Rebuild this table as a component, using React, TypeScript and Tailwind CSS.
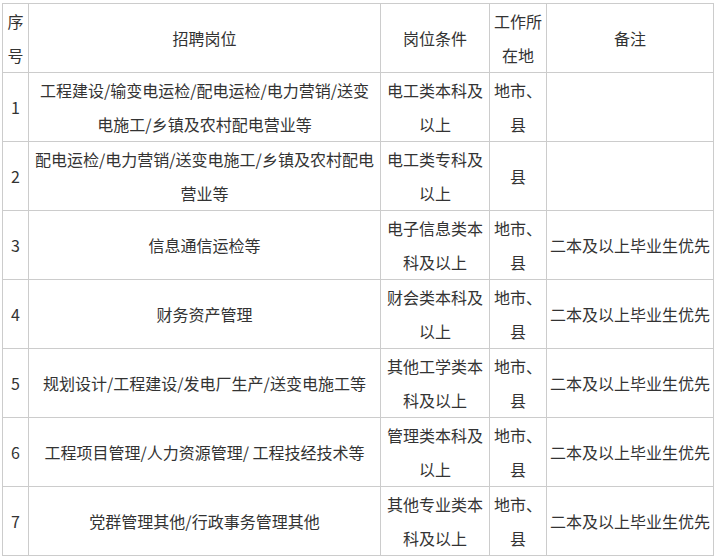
const rows = [
  {
    no: '1',
    post: '工程建设/输变电运检/配电运检/电力营销/送变电施工/乡镇及农村配电营业等',
    cond: '电工类本科及以上',
    place: '地市、县',
    note: '',
  },
  {
    no: '2',
    post: '配电运检/电力营销/送变电施工/乡镇及农村配电营业等',
    cond: '电工类专科及以上',
    place: '县',
    note: '',
  },
  {
    no: '3',
    post: '信息通信运检等',
    cond: '电子信息类本科及以上',
    place: '地市、县',
    note: '二本及以上毕业生优先',
  },
  {
    no: '4',
    post: '财务资产管理',
    cond: '财会类本科及以上',
    place: '地市、县',
    note: '二本及以上毕业生优先',
  },
  {
    no: '5',
    post: '规划设计/工程建设/发电厂生产/送变电施工等',
    cond: '其他工学类本科及以上',
    place: '地市、县',
    note: '二本及以上毕业生优先',
  },
  {
    no: '6',
    post: '工程项目管理/人力资源管理/ 工程技经技术等',
    cond: '管理类本科及以上',
    place: '地市、县',
    note: '二本及以上毕业生优先',
  },
  {
    no: '7',
    post: '党群管理其他/行政事务管理其他',
    cond: '其他专业类本科及以上',
    place: '地市、县',
    note: '二本及以上毕业生优先',
  },
]

const cell = 'border border-[#cccccc] px-[3px] py-0 text-center align-middle break-all'

export default function App() {
  return (
    <div className="min-h-screen bg-white pl-[2px] pt-[3px] text-[16px] leading-[34px] text-[#333333] font-['Noto_Sans_CJK_SC','Noto_Sans',sans-serif]">
      <table className="table-fixed border-collapse w-[712px]">
        <colgroup>
          <col className="w-[26px]" />
          <col className="w-[352px]" />
          <col className="w-[109px]" />
          <col className="w-[57px]" />
          <col className="w-[167px]" />
        </colgroup>
        <thead>
          <tr className="h-[69px]">
            <th className={`${cell} font-normal px-0`}>序号</th>
            <th className={`${cell} font-normal`}>招聘岗位</th>
            <th className={`${cell} font-normal`}>岗位条件</th>
            <th className={`${cell} font-normal`}>工作所在地</th>
            <th className={`${cell} font-normal`}>备注</th>
          </tr>
        </thead>
        <tbody>
          {rows.map((r) => (
            <tr key={r.no} className="h-[69px]">
              <td className={`${cell} px-0`}>{r.no}</td>
              <td className={cell}>{r.post}</td>
              <td className={cell}>{r.cond}</td>
              <td className={cell}>{r.place}</td>
              <td className={`${cell} px-0`}>{r.note}</td>
            </tr>
          ))}
        </tbody>
      </table>
    </div>
  )
}
